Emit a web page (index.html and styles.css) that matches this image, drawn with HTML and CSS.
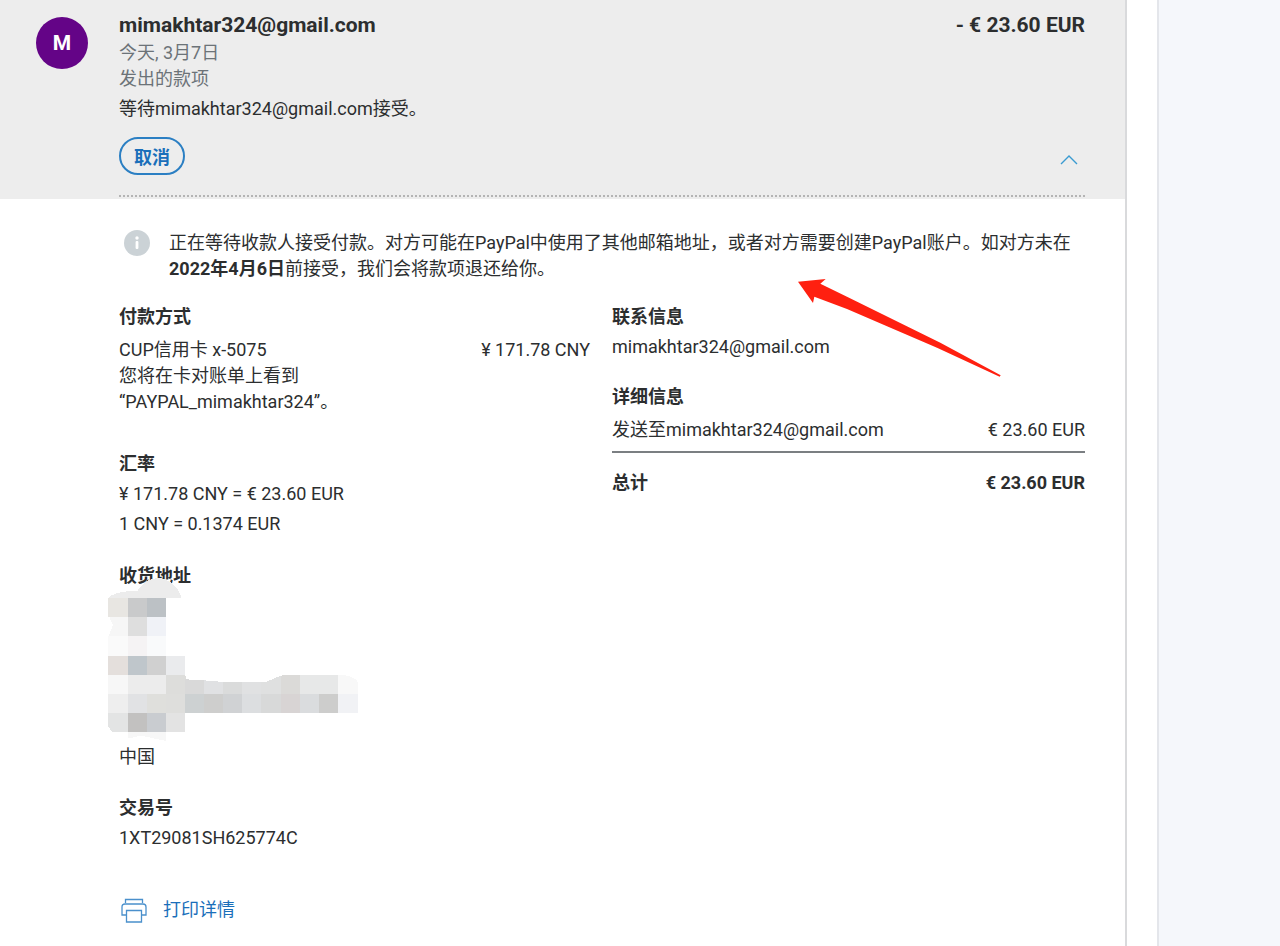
FILE: index.html
```html
<!DOCTYPE html>
<html lang="zh-CN">
<head>
    <meta charset="UTF-8">
    <meta name="viewport" content="width=device-width, initial-scale=1.0">
    <title>PayPal</title>
    <link rel="stylesheet" href="styles.css">
</head>
<body>

    <main class="transaction">
        <header class="summary">
            <div class="avatar">M</div>
            <div class="summary-body">
                <div class="row summary-title">
                    <h1>mimakhtar324@gmail.com</h1>
                    <span>- € 23.60 EUR</span>
                </div>
                <p class="muted">今天, 3月7日</p>
                <p class="muted">发出的款项</p>
                <p class="status">等待mimakhtar324@gmail.com接受。</p>
                <div class="row actions">
                    <button type="button" class="cancel">取消</button>
                    <button type="button" class="collapse" aria-label="收起">
                        <svg width="18" height="10" viewBox="0 0 18 10" fill="none" stroke="#3a9bd1" stroke-width="1.4"><path d="M1 9L9 1L17 9"/></svg>
                    </button>
                </div>
            </div>
        </header>

        <div class="details">
            <div class="notice">
                <svg width="26" height="26" viewBox="0 0 26 26">
                    <circle cx="13" cy="13" r="13" fill="#cbd2d6"/>
                    <circle cx="13" cy="8" r="1.7" fill="#fff"/>
                    <rect x="11.6" y="11" width="2.8" height="8" rx="1" fill="#fff"/>
                </svg>
                <p>正在等待收款人接受付款。对方可能在PayPal中使用了其他邮箱地址，或者对方需要创建PayPal账户。如对方未在<br><strong>2022年4月6日</strong>前接受，我们会将款项退还给你。</p>
            </div>

            <div class="columns">
                <div class="column">
                    <section class="payment">
                        <h2>付款方式</h2>
                        <div class="row">
                            <span>CUP信用卡 x-5075</span>
                            <span>¥ 171.78 CNY</span>
                        </div>
                        <p>您将在卡对账单上看到<br>“PAYPAL_mimakhtar324”。</p>
                    </section>
                    <section class="rate">
                        <h2>汇率</h2>
                        <p>¥ 171.78 CNY = € 23.60 EUR</p>
                        <p>1 CNY = 0.1374 EUR</p>
                    </section>
                    <section class="address">
                        <h2>收货地址</h2>
                        <!-- hidden address lines -->
                        <svg class="mosaic" width="250" height="165" viewBox="54 48 750 495" shape-rendering="crispEdges">
                            <path d="M55 113Q75 94 143 92Q165 54 212 54Q260 66 274 113Z" fill="#ececec"/>
                            <path d="M55 113h58v58H55z" fill="#e8e6e2"/>
                            <path d="M113 113h58v58h-58z" fill="#c9cacb"/>
                            <path d="M171 113h57v58h-57z" fill="#bcc1c5"/>
                            <path d="M58 171h55v58H55l14-33z" fill="#f6f6f6"/>
                            <path d="M113 171h58v58h-58z" fill="#dedede"/>
                            <path d="M171 171h57v58h-57z" fill="#f0f2f7"/>
                            <path d="M55 229h58v58H55z" fill="#fafafa"/>
                            <path d="M113 229h58v58h-58z" fill="#f5f3f4"/>
                            <path d="M171 229h57v58h-57z" fill="#f9fafb"/>
                            <path d="M55 287h58v58H55z" fill="#e4dfdc"/>
                            <path d="M113 287h58v58h-58z" fill="#bfc6cb"/>
                            <path d="M171 287h57v58h-57z" fill="#d0d0d0"/>
                            <path d="M228 287h58v58h-58z" fill="#eaebed"/>
                            <path d="M55 345h58v57H55z" fill="#f7f7f7"/>
                            <path d="M113 345h115v57H113z" fill="#ececec"/>
                            <path d="M228 345h58l4 14v43h-62z" fill="#dddddb"/>
                            <path d="M286 358l57 3v41h-57z" fill="#d9d9d9"/>
                            <path d="M343 361l57 5v36h-57z" fill="#e0e1e3"/>
                            <path d="M400 366h57v36h-57z" fill="#dadbdb"/>
                            <path d="M457 366h57v36h-57z" fill="#e0e1e2"/>
                            <path d="M514 366h14l44-19v55h-58z" fill="#dfe0e0"/>
                            <path d="M572 347l14-2h43v57h-57z" fill="#dbdad8"/>
                            <path d="M629 345h116v57H629z" fill="#e7e8e8"/>
                            <path d="M745 345q45 0 58 20v37h-58z" fill="#f8f8f8"/>
                            <path d="M55 402h58v57H55z" fill="#eeeeee"/>
                            <path d="M113 402h58v57h-58z" fill="#e1e2e4"/>
                            <path d="M171 402h57v57h-57z" fill="#dfdfdc"/>
                            <path d="M228 402h58v57h-58z" fill="#dededc"/>
                            <path d="M286 402h57v57h-57z" fill="#cdd1d2"/>
                            <path d="M343 402h57v57h-57z" fill="#cececd"/>
                            <path d="M400 402h57v57h-57z" fill="#d0d2d4"/>
                            <path d="M457 402h57v57h-57z" fill="#dcdee0"/>
                            <path d="M514 402h58v57h-58z" fill="#d8d9d9"/>
                            <path d="M572 402h57v57h-57z" fill="#d8d4d4"/>
                            <path d="M629 402h58v57h-58z" fill="#dadcde"/>
                            <path d="M687 402h58v57h-58z" fill="#cdcdcc"/>
                            <path d="M745 402h58v57h-58z" fill="#f1f2f5"/>
                            <path d="M55 459h58v57H68l-13-15z" fill="#e3e4e4"/>
                            <path d="M113 459h58v57h-58z" fill="#c2c1c0"/>
                            <path d="M171 459h57v57h-57z" fill="#c9ccd0"/>
                            <path d="M228 459h58v57h-58z" fill="#e3e3e3"/>
                            <path d="M113 516h115v27l-74-16-41 9z" fill="#f7f7f7"/>
                        </svg>
                        <p>中国</p>
                    </section>
                    <section class="txn">
                        <h2>交易号</h2>
                        <p>1XT29081SH625774C</p>
                    </section>
                    <a class="print" href="#">
                        <svg width="26" height="26" viewBox="0 0 26 26" fill="none" stroke="#4a90cc" stroke-width="1.3"><path d="M4.500 6V2.500h17V6M5.500 18H1V10q0-3 3-3h18q3 0 3 3v8h-4.500M5.500 13.500h15V25h-15z"/></svg>
                        打印详情
                    </a>
                </div>

                <div class="column">
                    <section class="contact">
                        <h2>联系信息</h2>
                        <p>mimakhtar324@gmail.com</p>
                    </section>
                    <section class="breakdown">
                        <h2>详细信息</h2>
                        <div class="row">
                            <span>发送至mimakhtar324@gmail.com</span>
                            <span>€ 23.60 EUR</span>
                        </div>
                        <div class="row total">
                            <span>总计</span>
                            <span>€ 23.60 EUR</span>
                        </div>
                    </section>
                </div>
            </div>

            <svg class="arrow" width="205" height="100" viewBox="50 170 615 300">
                <path d="M53 184L136 176L120 190L200 229L480 367L661 465L658 469L470 382L320 318L200 266L102 229L98 248Z" fill="#ff2010"/>
            </svg>
        </div>
    </main>

    <aside class="side"></aside>

</body>
</html>
```

FILE: styles.css
```css
* {
    box-sizing: border-box;
}

body {
    display: flex;
    min-height: 100vh;
    margin: 0;
    background-color: #ffffff;
    color: #2c2e2f;
    font-family: Roboto, "Noto Sans CJK SC", sans-serif;
    font-size: 18px;
    line-height: 26px;
}

h1,
h2,
p {
    margin: 0;
    font-size: 18px;
}

button {
    font-family: inherit;
    font-size: 18px;
    cursor: pointer;
}

svg {
    display: block;
    flex-shrink: 0;
}

.transaction {
    flex: 1;
    border-right: 2px solid #d9dadc;
}

.side {
    width: 123px;
    margin-left: 30px;
    background-color: #f5f7fb;
    border-left: 2px solid #e4e6eb;
}

.row {
    display: flex;
    justify-content: space-between;
}

/* summary */
.summary {
    display: flex;
    gap: 31px;
    padding: 12px 40px 2px 36px;
    background-color: #ededed;
}

.avatar {
    width: 52px;
    height: 52px;
    margin-top: 5px;
    border-radius: 50%;
    background-color: #640487;
    color: #ffffff;
    font-weight: bold;
    font-size: 21px;
    line-height: 52px;
    text-align: center;
}

.summary-body {
    flex: 1;
    border-bottom: 2px dotted #b4b4b4;
}

.summary-title {
    margin-bottom: 2px;
}

.summary-title,
.summary-title h1 {
    font-weight: bold;
    font-size: 21px;
}

.muted {
    color: #6c7378;
}

.status {
    margin-top: 4px;
}

.actions {
    align-items: center;
    padding: 15px 7px 20px 0;
}

.cancel {
    height: 38px;
    padding: 0 13px;
    border: 2px solid #2b7fc3;
    border-radius: 19px;
    background: none;
    color: #1a6fba;
    font-weight: bold;
}

.collapse {
    padding: 8px 0 0;
    border: none;
    background: none;
}

/* details */
.details {
    position: relative;
    padding: 31px 40px 0 119px;
}

.notice {
    display: flex;
    gap: 19px;
    padding-left: 5px;
}

.columns {
    display: grid;
    grid-template-columns: 471px 1fr;
    column-gap: 22px;
    margin-top: 22px;
}

.payment .row,
.breakdown .row {
    margin-top: 7px;
}

.rate {
    margin-top: 36px;
}

.rate p,
.contact p,
.txn p {
    margin-top: 4px;
}

.address {
    position: relative;
    margin-top: 26px;
}

.address p {
    margin-top: 155px;
}

.mosaic {
    position: absolute;
    top: 13px;
    left: -11px;
}

.txn {
    margin-top: 25px;
}

.print {
    display: flex;
    align-items: center;
    gap: 16px;
    margin-top: 46px;
    padding-left: 2px;
    color: #1a6fba;
    text-decoration: none;
}

.breakdown {
    margin-top: 24px;
}

.breakdown .total {
    margin-top: 8px;
    padding-top: 17px;
    border-top: 2px solid #7b7f82;
    font-weight: bold;
}

.arrow {
    position: absolute;
    top: 78px;
    left: 797px;
}
```
